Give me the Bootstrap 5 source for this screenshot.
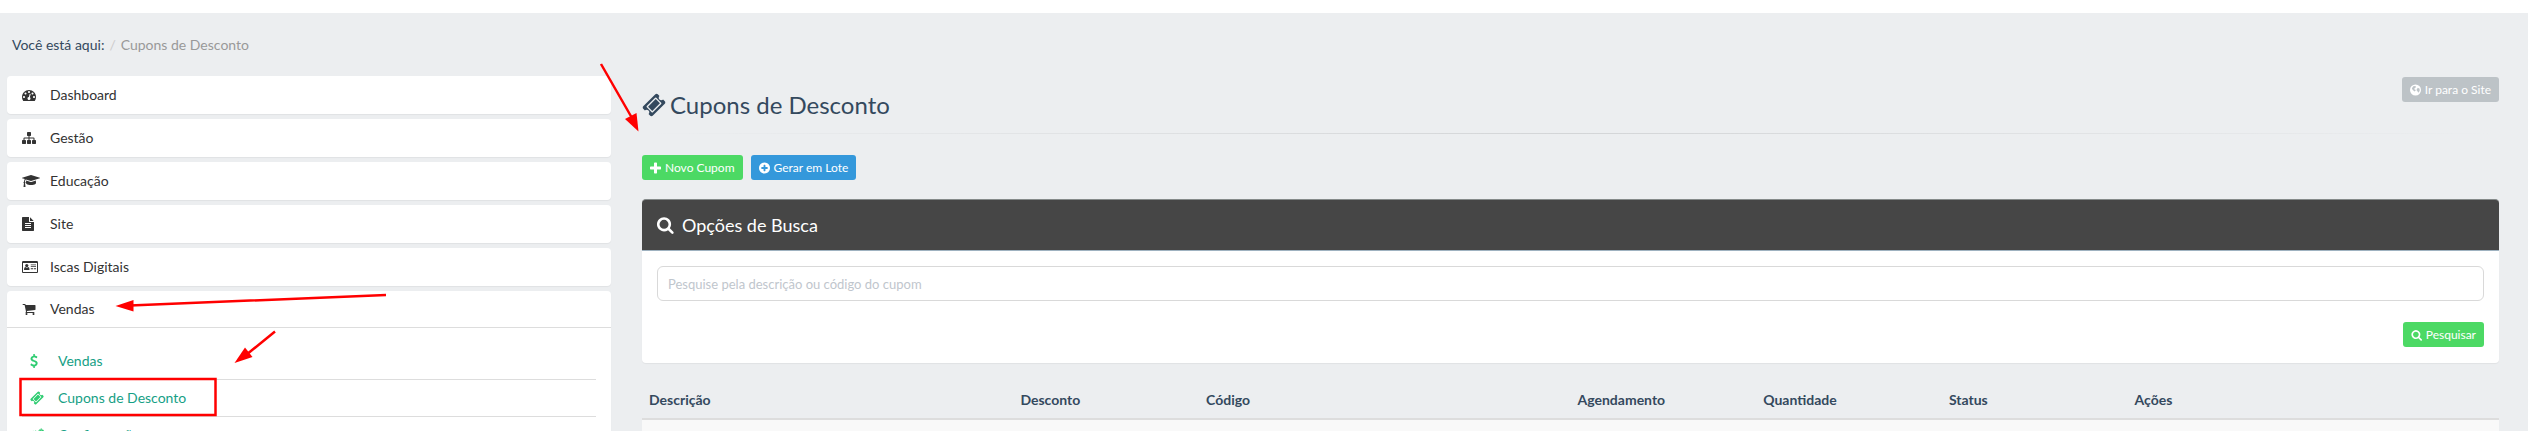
<!DOCTYPE html>
<html lang="pt-BR">
<head>
<meta charset="utf-8">
<meta name="viewport" content="width=device-width, initial-scale=1">
<title>Cupons de Desconto</title>
<link href="https://cdn.jsdelivr.net/npm/bootstrap@5.3.0/dist/css/bootstrap.min.css" rel="stylesheet">
<style>
  body { font-family: Lato, sans-serif; font-size: 14px; line-height: 20px; color: #34495e; background: #eceef0; }
  a { text-decoration: none; }
  .ico { width: 14px; height: 14px; fill: currentColor; flex: none; overflow: visible; }
  .ico.wide { width: 18px; }
  .ico.slim { width: 12px; }
  .ico.card-w { width: 16px; }
  .ico.cash { width: 8px; }
  .ico.big { width: 24px; height: 24px; }
  .top-strip { height: 13px; background: #fff; }
  .crumbs { padding: 22px 12px 21px; --bs-breadcrumb-divider-color: #ccc; --bs-breadcrumb-item-padding-x: 5px; }
  .crumbs .active { color: #999; }
  .side-col { padding: 0 21px 0 7px; }
  .main-col { padding: 1px 29px 0 10px; }
  .side-menu { gap: 5px; }
  .side-box { background: #fff; border-radius: 4px; box-shadow: 0 1px 1px rgba(0,0,0,.05); }
  .side-link { height: 38px; padding: 0 15px; color: #333; }
  .side-link .slot { width: 28px; }
  .side-open { height: 37px; border-bottom: 1px solid #ddd; }
  .side-sub { padding: 15px 15px 0; }
  .side-sub a { height: 37px; padding: 0 8px; color: #16a085; border-bottom: 1px solid #ddd; }
  .side-sub .slot { width: 28px; color: #2ecc71; }
  .page-title { font-size: 24px; line-height: 28px; padding-top: 14px; }
  .fade-rule { height: 1px; margin: 14px 0 21px; background: linear-gradient(to right, transparent, #d3d5d7, transparent); }
  .btn-mini { display: inline-flex; align-items: center; height: 25px; padding: 0 8px; font-size: 12px; line-height: 18px; color: #fff; border: 0; border-radius: 3px; }
  .btn-mini:hover { color: #fff; }
  .btn-mini .ico { width: 11px; height: 12px; }
  .bg-new { background: #4cd964; }
  .bg-lot { background: #3498db; }
  .bg-site { background: #bdc3c7; }
  .bg-new:hover { background: #43c65a; }
  .bg-lot:hover { background: #2f89c5; }
  .bg-site:hover { background: #acb3b8; }
  .find-box { margin-top: 19px; background: #fff; border-radius: 4px; box-shadow: 0 1px 1px rgba(0,0,0,.05); }
  .find-head { height: 52px; padding: 0 14px; font-size: 18px; color: #fff; background: #464646; border-top: 1px solid #858a8a; border-bottom: 1px solid #9fb2c0; border-radius: 4px 4px 0 0; }
  .find-head .ico { width: 18px; height: 18px; }
  .find-form { padding: 15px 15px 16px; }
  .find-form .btn-mini { margin-top: 21px; }
  .find-box .form-control { height: 35px; padding: 0 10px; font-size: 13px; border: 1px solid #d9d9d9; border-radius: 6px; }
  .find-box .form-control::placeholder { color: #bfc6cd; }
  .coupons { margin-top: 19px; color: #34495e; --bs-table-bg: transparent; table-layout: fixed; }
  .coupons th { padding: 8px 7px; border-bottom: 2px solid #ddd; font-weight: 700; }
  .coupons td { height: 38px; background: #f9f9f9; border: 0; }
  .c20 { width: 20%; }
  .c10 { width: 10%; }
  .marks { z-index: 5; pointer-events: none; stroke: #f00; fill: #f00; }
</style>
</head>
<body class="vh-100 overflow-hidden position-relative">
<svg class="d-none">
  <symbol id="search" viewBox="0 0 1728 1792"><path d="M1216 832q0-185-131.500-316.500t-316.500-131.500-316.500 131.500-131.500 316.500 131.500 316.500 316.500 131.500 316.500-131.500 131.500-316.500zm512 832q0 52-38 90t-90 38q-54 0-90-38l-343-342q-179 124-399 124-143 0-273.500-55.500t-225-150-150-225-55.500-273.500 55.500-273.500 150-225 225-150 273.500-55.500 273.500 55.500 225 150 150 225 55.500 273.500q0 220-124 399l343 343q37 37 37 90z"/></symbol>
  <symbol id="plus" viewBox="192 128 1408 1408"><path d="M1600 736v192q0 40-28 68t-68 28h-416v416q0 40-28 68t-68 28h-192q-40 0-68-28t-28-68v-416h-416q-40 0-68-28t-28-68v-192q0-40 28-68t68-28h416v-416q0-40 28-68t68-28h192q40 0 68 28t28 68v416h416q40 0 68 28t28 68z"/></symbol>
  <symbol id="plus-circle" viewBox="128 128 1536 1536"><path d="M1344 960v-128q0-26-19-45t-45-19h-256v-256q0-26-19-45t-45-19h-128q-26 0-45 19t-19 45v256h-256q-26 0-45 19t-19 45v128q0 26 19 45t45 19h256v256q0 26 19 45t45 19h128q26 0 45-19t19-45v-256h256q26 0 45-19t19-45zm320-64q0 209-103 385.500t-279.500 279.500-385.500 103-385.500-103-279.500-279.500-103-385.500 103-385.500 279.500-279.500 385.500-103 385.500 103 279.500 279.500 103 385.500z"/></symbol>
  <symbol id="ticket" viewBox="0 0 1792 1792"><path d="M1024 452l316 316-572 572-316-316zm-211 979l618-618q19-19 19-45t-19-45l-362-362q-18-18-45-18t-45 18l-618 618q-19 19-19 45t19 45l362 362q18 18 45 18t45-18zm889-637l-907 908q-37 37-90.500 37t-90.500-37l-126-126q56-56 56-136t-56-136-136-56-136 56l-125-126q-37-37-37-90.500t37-90.500l907-906q37-37 90.500-37t90.500 37l125 125q-56 56-56 136t56 136 136 56 136-56l126 125q37 37 37 90.500t-37 90.500z"/></symbol>
  <symbol id="gauge" viewBox="0 0 1792 1792"><path d="M384 1152q0-53-37.500-90.500t-90.500-37.500-90.500 37.500-37.500 90.500 37.500 90.500 90.500 37.500 90.500-37.500 37.500-90.500zm192-448q0-53-37.500-90.500t-90.500-37.500-90.500 37.500-37.500 90.500 37.500 90.500 90.500 37.500 90.500-37.500 37.500-90.500zm428 481l101-382q6-26-7.500-48.500t-38.500-29.500-48 6.500-30 39.500l-101 382q-60 5-107 43.500t-63 98.500q-20 77 20 146t117 89 146-20 89-117q16-60-6-117t-72-91zm660-33q0-53-37.500-90.500t-90.500-37.500-90.500 37.500-37.500 90.500 37.500 90.500 90.500 37.500 90.500-37.500 37.500-90.500zm-640-640q0-53-37.500-90.500t-90.500-37.500-90.500 37.500-37.500 90.500 37.500 90.500 90.500 37.500 90.500-37.500 37.500-90.500zm448 192q0-53-37.500-90.500t-90.500-37.500-90.500 37.500-37.500 90.500 37.500 90.500 90.500 37.500 90.500-37.500 37.500-90.500zm320 448q0 261-141 483-19 29-54 29h-1402q-35 0-54-29-141-221-141-483 0-182 71-348t191-286 286-191 348-71 348 71 286 191 191 286 71 348z"/></symbol>
  <symbol id="sitemap" viewBox="0 0 1792 1792"><path d="M1792 1248v320q0 40-28 68t-68 28h-320q-40 0-68-28t-28-68v-320q0-40 28-68t68-28h96v-192h-512v192h96q40 0 68 28t28 68v320q0 40-28 68t-68 28h-320q-40 0-68-28t-28-68v-320q0-40 28-68t68-28h96v-192h-512v192h96q40 0 68 28t28 68v320q0 40-28 68t-68 28h-320q-40 0-68-28t-28-68v-320q0-40 28-68t68-28h96v-192q0-52 38-90t90-38h512v-192h-96q-40 0-68-28t-28-68v-320q0-40 28-68t68-28h320q40 0 68 28t28 68v320q0 40-28 68t-68 28h-96v192h512q52 0 90 38t38 90v192h96q40 0 68 28t28 68z"/></symbol>
  <symbol id="cap" viewBox="0 0 2304 1792"><path d="M1774 836l18 316q4 69-82 128t-235 93.500-323 34.500-323-34.500-235-93.500-82-128l18-316 574 181q22 7 48 7t48-7zm530-324q0 23-22 31l-1120 352q-4 1-10 1t-10-1l-652-206q-43 34-71 111.500t-34 178.500q63 36 63 109 0 69-58 107l58 433q2 14-8 25-9 11-24 11h-192q-15 0-24-11-10-11-8-25l58-433q-58-38-58-107 0-73 65-111 11-207 98-330l-333-104q-22-8-22-31t22-31l1120-352q4-1 10-1t10 1l1120 352q22 8 22 31z"/></symbol>
  <symbol id="file" viewBox="128 0 1536 1792"><path d="M1596 476q14 14 28 36h-472v-472q22 14 36 28zm-476 164h544v1056q0 40-28 68t-68 28h-1344q-40 0-68-28t-28-68v-1600q0-40 28-68t68-28h800v544q0 40 28 68t68 28zm160 736v-64q0-14-9-23t-23-9h-704q-14 0-23 9t-9 23v64q0 14 9 23t23 9h704q14 0 23-9t9-23zm0-256v-64q0-14-9-23t-23-9h-704q-14 0-23 9t-9 23v64q0 14 9 23t23 9h704q14 0 23-9t9-23zm0-256v-64q0-14-9-23t-23-9h-704q-14 0-23 9t-9 23v64q0 14 9 23t23 9h704q14 0 23-9t9-23z"/></symbol>
  <symbol id="idcard" viewBox="0 0 2048 1792"><path fill-rule="evenodd" d="M160 128h1728q66 0 113 47t47 113v1216q0 66-47 113t-113 47H160q-66 0-113-47T0 1504V288q0-66 47-113t113-47zm-32 256v1120q0 32 32 32h1728q32 0 32-32V384z"/><path d="M256 1216q0-300 170-310 90 75 188 75t188-75q160 20 160 310 0 64-70 64H326q-70 0-70-64z"/><circle cx="610" cy="710" r="205"/><path d="M1120 560h672v110h-672zM1120 800h672v110h-672zM1120 1060h288v120h-288zM1504 1060h288v120h-288z"/></symbol>
  <symbol id="cart" viewBox="64 0 1664 1792"><path d="M704 1536q0 52-38 90t-90 38-90-38-38-90 38-90 90-38 90 38 38 90zm896 0q0 52-38 90t-90 38-90-38-38-90 38-90 90-38 90 38 38 90zm128-1088v512q0 24-16.500 42.500t-40.500 21.500l-1044 122q13 60 13 70 0 16-24 64h920q26 0 45 19t19 45-19 45-45 19h-1024q-26 0-45-19t-19-45q0-11 8-31.500t16-36 21.500-40 15.500-29.500l-177-823h-204q-26 0-45-19t-19-45 19-45 45-19h256q16 0 28.500 6.500t19.500 15.500 13 24.500 8 26 5.500 29.500 4.500 26h1201q26 0 45 19t19 45z"/></symbol>
  <symbol id="dollar" viewBox="384 0 1024 1792"><path d="M1362 1185q0 153-99.500 263.500t-258.500 136.500v175q0 14-9 23t-23 9h-135q-13 0-22.500-9.500t-9.500-22.500v-175q-66-9-127.500-31t-101.500-44.500-74-48-46.500-37.500-17.500-18q-17-21-2-41l103-135q7-10 23-12 15-2 24 9l2 2q113 99 243 125 37 8 74 8 81 0 142.500-43t61.500-122q0-28-15-53t-33.500-42-58.500-37.500-66-32-80-32.500q-39-16-61.500-25t-61.500-26.500-62.500-31-56.500-35.500-53.500-42.500-43.500-49-35.500-58-21-66.500-8.500-78q0-138 98-242t255-134v-180q0-13 9.500-22.500t22.500-9.500h135q14 0 23 9t9 23v176q57 6 110.500 23t87 33.500 63.500 37.500 39 29 15 14q17 18 5 38l-81 146q-8 15-23 16-14 3-27-7-3-3-14.500-12t-39-26.500-58.500-32-74.500-26-85.500-11.500q-95 0-155 43t-60 111q0 26 8.500 48t29.500 41.500 39.500 33 56 31 60.500 27 70 27.500q53 20 81 31.500t76 35 75.500 42.500 62 50 53 63.500 31.500 76.500 13 94z"/></symbol>
  <symbol id="globe" viewBox="0 0 24 24"><path fill-rule="evenodd" d="M12 0a12 12 0 1 0 0 24 12 12 0 0 0 0-24zM8 3l5 1-1 3-3 2 1 2 3 1-3 3-4-3-2-4zM17 7l4 2 0 5-3 4-2-4-2-2z"/></symbol>
  <symbol id="cogs" viewBox="0 0 30 28"><g fill="none" stroke="currentColor"><circle cx="10" cy="15" r="6" stroke-width="5"/><circle cx="10" cy="15" r="9" stroke-width="3" stroke-dasharray="4 3"/><circle cx="24" cy="6" r="3" stroke-width="3"/><circle cx="24" cy="6" r="5" stroke-width="2" stroke-dasharray="3 2"/><circle cx="24" cy="23" r="3" stroke-width="3"/></g></symbol>
</svg>

<div class="top-strip"></div>
<nav aria-label="Trilha">
  <ol class="breadcrumb crumbs mb-0">
    <li class="breadcrumb-item">Você está aqui:</li>
    <li class="breadcrumb-item active" aria-current="page">Cupons de Desconto</li>
  </ol>
</nav>

<div class="container-fluid p-0">
  <div class="row g-0">
    <aside class="col-3 side-col">
      <nav class="side-menu d-flex flex-column" aria-label="Menu">
        <div class="side-box"><a href="#" class="side-link d-flex align-items-center"><span class="slot d-flex"><svg class="ico"><use href="#gauge"/></svg></span>Dashboard</a></div>
        <div class="side-box"><a href="#" class="side-link d-flex align-items-center"><span class="slot d-flex"><svg class="ico"><use href="#sitemap"/></svg></span>Gestão</a></div>
        <div class="side-box"><a href="#" class="side-link d-flex align-items-center"><span class="slot d-flex"><svg class="ico wide"><use href="#cap"/></svg></span>Educação</a></div>
        <div class="side-box"><a href="#" class="side-link d-flex align-items-center"><span class="slot d-flex"><svg class="ico slim"><use href="#file"/></svg></span>Site</a></div>
        <div class="side-box"><a href="#" class="side-link d-flex align-items-center"><span class="slot d-flex"><svg class="ico card-w"><use href="#idcard"/></svg></span>Iscas Digitais</a></div>
        <div class="side-box">
          <a href="#" class="side-link side-open d-flex align-items-center"><span class="slot d-flex"><svg class="ico"><use href="#cart"/></svg></span>Vendas</a>
          <div class="side-sub">
            <a href="#" class="d-flex align-items-center"><span class="slot d-flex"><svg class="ico cash"><use href="#dollar"/></svg></span>Vendas</a>
            <a href="#" class="d-flex align-items-center"><span class="slot d-flex"><svg class="ico"><use href="#ticket"/></svg></span>Cupons de Desconto</a>
            <a href="#" class="d-flex align-items-center"><span class="slot d-flex"><svg class="ico"><use href="#cogs"/></svg></span>Configurações</a>
          </div>
        </div>
      </nav>
    </aside>

    <main class="col-9 main-col">
      <header class="d-flex justify-content-between align-items-start">
        <h1 class="page-title d-flex align-items-center gap-1 mb-0 fw-normal"><svg class="ico big"><use href="#ticket"/></svg>Cupons de Desconto</h1>
        <a href="#" class="btn btn-mini bg-site gap-1"><svg class="ico"><use href="#globe"/></svg>Ir para o Site</a>
      </header>
      <div class="fade-rule"></div>
      <div class="d-flex gap-2">
        <a href="#" class="btn btn-mini bg-new gap-1"><svg class="ico"><use href="#plus"/></svg>Novo Cupom</a>
        <a href="#" class="btn btn-mini bg-lot gap-1"><svg class="ico"><use href="#plus-circle"/></svg>Gerar em Lote</a>
      </div>
      <section class="find-box">
        <div class="find-head d-flex align-items-center gap-2"><svg class="ico"><use href="#search"/></svg>Opções de Busca</div>
        <form class="find-form">
          <input type="text" class="form-control" placeholder="Pesquise pela descrição ou código do cupom" aria-label="Pesquise pela descrição ou código do cupom">
          <div class="d-flex justify-content-end"><button type="button" class="btn btn-mini bg-new gap-1"><svg class="ico"><use href="#search"/></svg>Pesquisar</button></div>
        </form>
      </section>
      <table class="table coupons mb-0">
        <colgroup><col class="c20"><col class="c10"><col class="c20"><col class="c10"><col class="c10"><col class="c10"><col class="c20"></colgroup>
        <thead><tr><th>Descrição</th><th>Desconto</th><th>Código</th><th>Agendamento</th><th>Quantidade</th><th>Status</th><th>Ações</th></tr></thead>
        <tbody><tr><td colspan="7"></td></tr></tbody>
      </table>
    </main>
  </div>
</div>

<svg class="marks position-absolute top-0 start-0" width="660" height="431">
  <g stroke-width="2.500" fill="none"><path d="M601 64L632 118M386 295L130 305.500M275 331.500L246 355"/><rect x="20.500" y="379" width="195" height="36"/></g>
  <g stroke="none"><path d="M638.500 131.500L625 119L636.500 113z"/><path d="M115.500 306L133.500 300L133.500 311.500z"/><path d="M234.500 363L245 347.500L252.500 357z"/></g>
</svg>
<script src="https://cdn.jsdelivr.net/npm/bootstrap@5.3.0/dist/js/bootstrap.bundle.min.js"></script>
</body>
</html>
